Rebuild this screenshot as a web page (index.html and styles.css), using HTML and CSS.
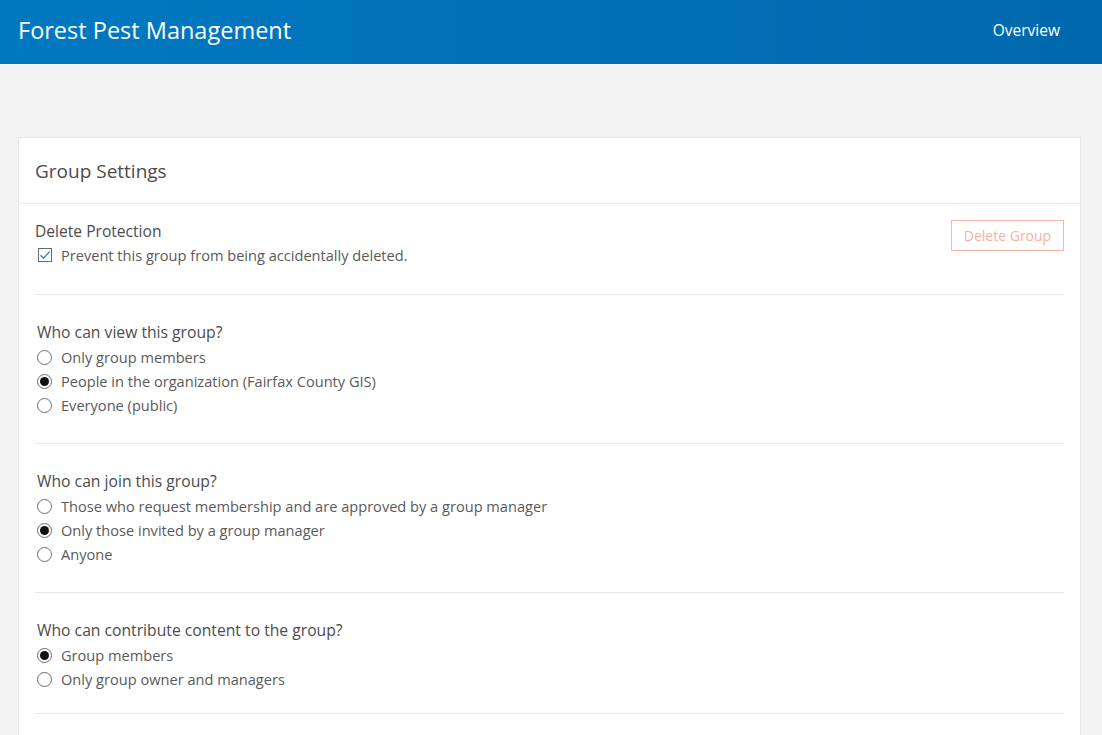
FILE: index.html
```html
<!DOCTYPE html>
<html lang="en">
<head>
<meta charset="utf-8">
<title>Forest Pest Management</title>
<link rel="stylesheet" href="styles.css">
</head>
<body>
<header class="topbar">
  <h1 class="site-title">Forest Pest Management</h1>
  <nav class="topnav"><a class="nav-link" href="#">Overview</a></nav>
</header>
<main class="page">
  <section class="card">
    <div class="card-header">Group Settings</div>
    <div class="card-body">
      <div class="setting setting-first">
        <div class="setting-main">
          <div class="setting-title title-flush">Delete Protection</div>
          <label class="option">
            <span class="checkbox"><svg width="12" height="10" viewBox="0 0 12 10"><path d="M1.5 5.2 L4.6 8.2 L10.6 1.6" fill="none" stroke="#2a7fc0" stroke-width="1.3"/></svg></span>
            <span class="option-text">Prevent this group from being accidentally deleted.</span>
          </label>
        </div>
        <button class="btn-danger">Delete Group</button>
      </div>

      <div class="setting">
        <div class="setting-title">Who can view this group?</div>
        <label class="option"><span class="radio"></span><span class="option-text">Only group members</span></label>
        <label class="option"><span class="radio checked"></span><span class="option-text">People in the organization (Fairfax County GIS)</span></label>
        <label class="option"><span class="radio"></span><span class="option-text">Everyone (public)</span></label>
      </div>

      <div class="setting">
        <div class="setting-title">Who can join this group?</div>
        <label class="option"><span class="radio"></span><span class="option-text">Those who request membership and are approved by a group manager</span></label>
        <label class="option"><span class="radio checked"></span><span class="option-text">Only those invited by a group manager</span></label>
        <label class="option"><span class="radio"></span><span class="option-text">Anyone</span></label>
      </div>

      <div class="setting setting-last">
        <div class="setting-title">Who can contribute content to the group?</div>
        <label class="option"><span class="radio checked"></span><span class="option-text">Group members</span></label>
        <label class="option"><span class="radio"></span><span class="option-text">Only group owner and managers</span></label>
      </div>
    </div>
  </section>
</main>
</body>
</html>
```
FILE: styles.css
```css
* { box-sizing: border-box; }
html, body { margin: 0; padding: 0; }
body {
  background: #f3f3f3;
  font-family: "Open Sans", "Lato", sans-serif;
  color: #4c4c4c;
  height: 735px;
  overflow: hidden;
}
.topbar {
  height: 64px;
  background: linear-gradient(90deg, #0079c1 0%, #006fb6 60%, #0068ad 100%);
  display: flex;
  align-items: center;
  justify-content: space-between;
  padding: 0 42px 0 18px;
}
.site-title {
  margin: 0 0 4px;
  font-weight: 400;
  font-size: 23.5px;
  color: #fff;
}
.nav-link {
  color: #fff;
  text-decoration: none;
  font-size: 15.5px;
  display: block;
  margin-bottom: 4px;
}
.page {
  padding: 73px 21px 0 18px;
}
.card {
  background: #fff;
  border: 1px solid #e6e6e6;
  min-height: 620px;
}
.card-header {
  height: 66px;
  display: flex;
  align-items: center;
  padding: 0 16px;
  font-size: 19px;
  color: #4c4c4c;
  border-bottom: 1px solid #e8e8e8;
}
.card-body {
  padding: 0 16px;
}
.setting {
  padding: 25px 2px 26px;
  border-bottom: 1px solid #e8e8e8;
}
.setting-last { padding-bottom: 22px; }
.setting-first {
  display: flex;
  justify-content: space-between;
  align-items: flex-start;
  padding: 15px 0 27px;
}
.setting-title {
  font-size: 15.7px;
  line-height: 24px;
  color: #4c4c4c;
  margin-bottom: 1px;
}
.setting-first .setting-title { margin-bottom: 0; font-size: 15.6px; }
.option {
  display: flex;
  align-items: center;
  height: 24px;
  font-size: 14.6px;
  color: #5a5a5a;
}
.setting-first .option { padding-left: 3px; }
.option-text { margin-left: 9px; }
.checkbox {
  width: 14px;
  height: 14px;
  border: 1px solid #6b6b6b;
  display: flex;
  align-items: center;
  justify-content: center;
}
.radio {
  width: 15px;
  height: 15px;
  border: 1px solid #6b6b6b;
  border-radius: 50%;
  display: flex;
  align-items: center;
  justify-content: center;
}
.radio.checked::after {
  content: "";
  width: 9px;
  height: 9px;
  border-radius: 50%;
  background: #111;
}
.btn-danger {
  margin-top: 1px;
  width: 113px;
  height: 31px;
  background: #fff;
  border: 1px solid #f6b7a8;
  color: #f4b2a2;
  font-family: inherit;
  font-size: 14px;
  padding: 0;
}
```
